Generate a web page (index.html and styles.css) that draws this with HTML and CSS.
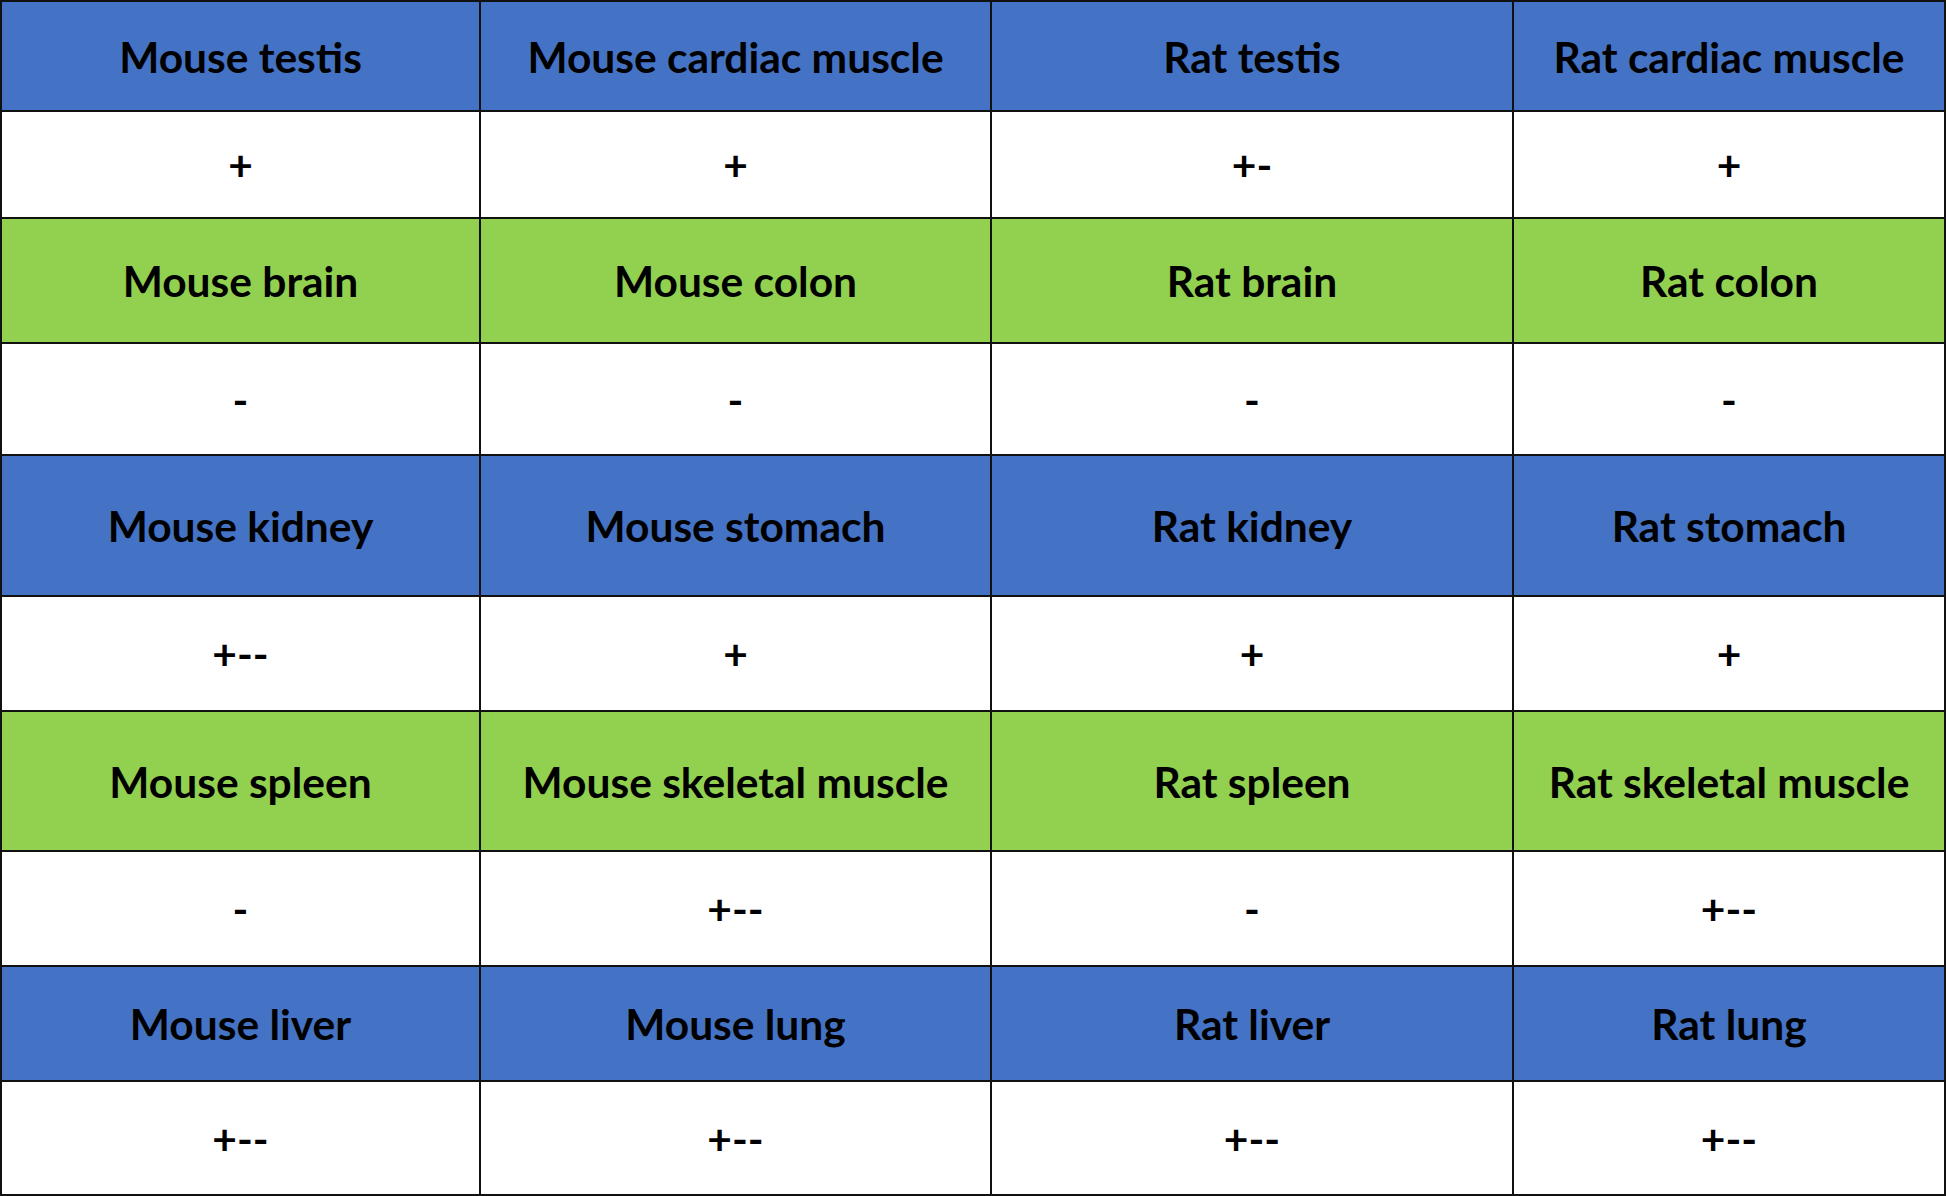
FILE: index.html
```html
<!DOCTYPE html>
<html lang="en">
<head>
<meta charset="utf-8">
<title>Tissue table</title>
<link rel="stylesheet" href="styles.css">
</head>
<body>
<div class="table">
  <div class="cell blue">Mouse testis</div>
  <div class="cell blue">Mouse cardiac muscle</div>
  <div class="cell blue">Rat testis</div>
  <div class="cell blue">Rat cardiac muscle</div>
  <div class="cell val">+</div>
  <div class="cell val">+</div>
  <div class="cell val">+-</div>
  <div class="cell val">+</div>

  <div class="cell green">Mouse brain</div>
  <div class="cell green">Mouse colon</div>
  <div class="cell green">Rat brain</div>
  <div class="cell green">Rat colon</div>
  <div class="cell val">-</div>
  <div class="cell val">-</div>
  <div class="cell val">-</div>
  <div class="cell val">-</div>

  <div class="cell blue">Mouse kidney</div>
  <div class="cell blue">Mouse stomach</div>
  <div class="cell blue">Rat kidney</div>
  <div class="cell blue">Rat stomach</div>
  <div class="cell val">+--</div>
  <div class="cell val">+</div>
  <div class="cell val">+</div>
  <div class="cell val">+</div>

  <div class="cell green">Mouse spleen</div>
  <div class="cell green">Mouse skeletal muscle</div>
  <div class="cell green">Rat spleen</div>
  <div class="cell green">Rat skeletal muscle</div>
  <div class="cell val">-</div>
  <div class="cell val">+--</div>
  <div class="cell val">-</div>
  <div class="cell val">+--</div>

  <div class="cell blue">Mouse liver</div>
  <div class="cell blue">Mouse lung</div>
  <div class="cell blue">Rat liver</div>
  <div class="cell blue">Rat lung</div>
  <div class="cell val">+--</div>
  <div class="cell val">+--</div>
  <div class="cell val">+--</div>
  <div class="cell val">+--</div>
</div>
</body>
</html>
```
FILE: styles.css
```css
html, body {
  margin: 0;
  padding: 0;
  background: #ffffff;
}

.table {
  display: grid;
  grid-template-columns: 477px 509px 520px 430px;
  grid-template-rows: 108px 105px 123px 110px 139px 113px 138px 113px 113px 112px;
  gap: 2px;
  padding: 2px;
  width: 1946px;
  height: 1196px;
  box-sizing: border-box;
  background: #111111;
  font-family: Lato, "Open Sans", "Liberation Sans", sans-serif;
  font-weight: 700;
  font-size: 42.5px;
  color: #000000;
}

.cell {
  display: flex;
  align-items: center;
  justify-content: center;
  white-space: nowrap;
}

.blue {
  background: #4472c4;
}

.green {
  background: #92d050;
}

.val {
  background: #ffffff;
}
```
